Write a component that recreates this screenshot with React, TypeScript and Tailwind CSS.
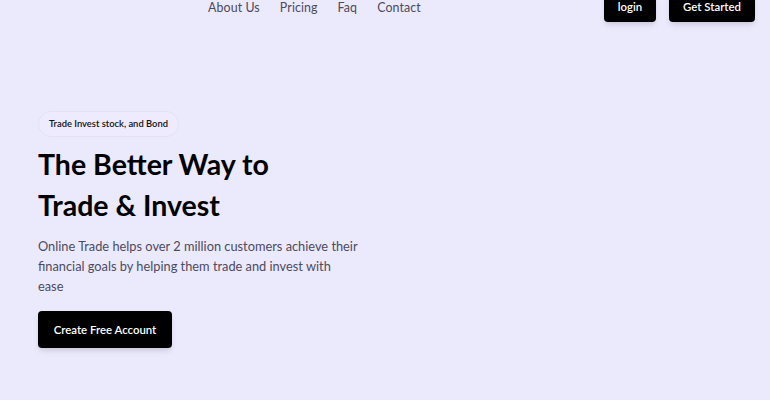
export default function App() {
  return (
    <div className="min-h-[400px] w-full overflow-hidden bg-[#ebe9fc]" style={{ fontFamily: "Lato, 'Noto Sans', sans-serif" }}>
      <header className="-mt-[8px] flex h-[30px] items-center">
        <nav className="ml-[208px] mt-[3px] flex gap-[20px] text-[12.4px] tracking-[0.1px] text-[#4b4b5a]">
          <a>About Us</a>
          <a>Pricing</a>
          <a>Faq</a>
          <a>Contact</a>
        </nav>
        <div className="ml-auto mr-[15px] flex gap-[13px]">
          <button className="h-[29px] w-[52px] rounded-[4px] bg-black text-[11.4px] font-semibold text-white shadow-md">login</button>
          <button className="h-[29px] w-[86px] rounded-[4px] bg-black text-[11.4px] font-semibold text-white shadow-md">Get Started</button>
        </div>
      </header>
      <main className="px-[38px] pt-[87px]">
        <div className="inline-flex h-[26px] items-center rounded-full border border-[#e3e1f6] bg-[#edebfd] px-[10px] text-[9.4px] font-semibold text-[#111]">
          Trade Invest stock, and Bond
        </div>
        <h1 className="mt-[7px] text-[28.5px] font-bold leading-[41px] text-black">
          The Better Way to
          <br />
          Trade &amp; Invest
        </h1>
        <p className="mt-[10px] w-[320px] text-[12.8px] leading-[20px] text-[#4b4b5e]">
          Online Trade helps over 2 million customers achieve their financial goals by helping them trade and invest with ease
        </p>
        <button className="mt-[15px] h-[37px] w-[134px] rounded-[4px] bg-black text-[11.4px] font-semibold text-white shadow-md">
          Create Free Account
        </button>
      </main>
    </div>
  );
}
